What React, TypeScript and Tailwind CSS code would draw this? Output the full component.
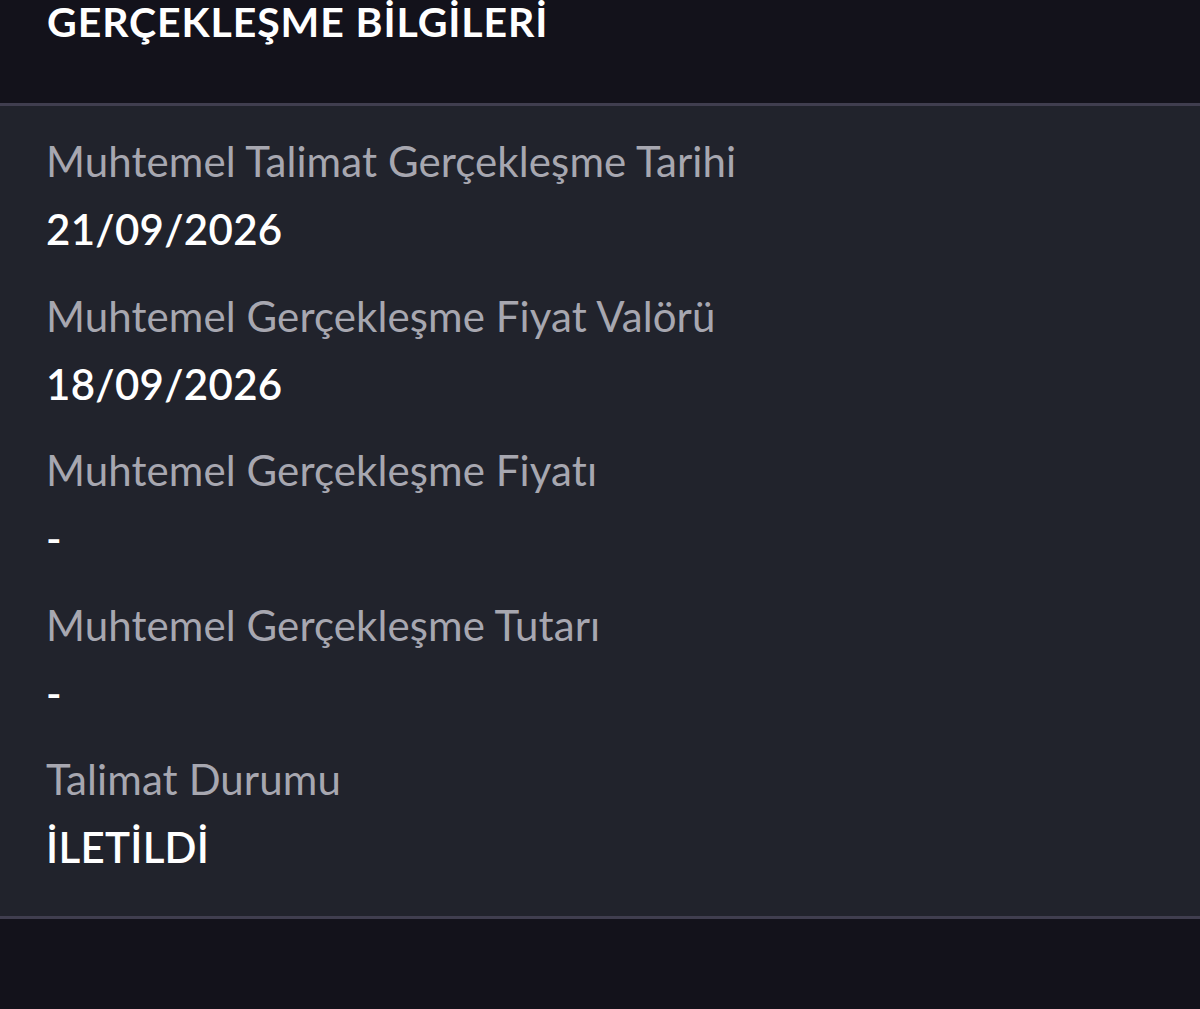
import React from "react";

const rows = [
  { label: "Muhtemel Talimat Gerçekleşme Tarihi", value: "21/09/2026" },
  { label: "Muhtemel Gerçekleşme Fiyat Valörü", value: "18/09/2026" },
  { label: "Muhtemel Gerçekleşme Fiyatı", value: "-" },
  { label: "Muhtemel Gerçekleşme Tutarı", value: "-" },
  { label: "Talimat Durumu", value: "İLETİLDİ" },
];

export default function App() {
  return (
    <div
      className="w-[1200px] h-[1009px] bg-[#13121b] flex flex-col overflow-hidden"
      style={{ fontFamily: "Lato, 'Noto Sans', sans-serif" }}
    >
      <div className="h-[103px] shrink-0 pl-[47px]">
        <div className="text-[41px] leading-[48px] font-bold text-white -mt-[2px] tracking-[0.9px]">
          GERÇEKLEŞME BİLGİLERİ
        </div>
      </div>
      <div className="border-t-[3px] border-b-[3px] border-[#403e4f] bg-[#21232c] h-[816px] shrink-0 px-[46px] pt-[31px]">
        {rows.map((r, i) => (
          <div key={i} className="h-[154.5px] flex flex-col">
            <div className="text-[42px] leading-[48px] text-[#a7a7b0] tracking-[0.1px]">{r.label}</div>
            <div className="text-[42px] leading-[48px] font-semibold text-white mt-[20px] tracking-[0.3px]">
              {r.value}
            </div>
          </div>
        ))}
      </div>
      <div className="flex-1" />
    </div>
  );
}
